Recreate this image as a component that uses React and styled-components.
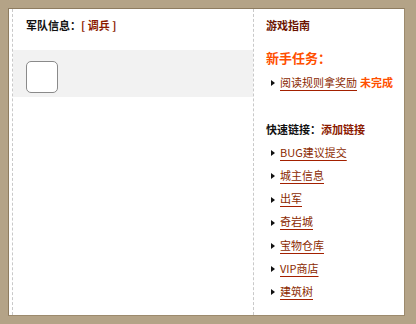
import React from 'react';
import styled, { createGlobalStyle } from 'styled-components';

const GlobalStyle = createGlobalStyle`
  html, body {
    margin: 0;
    padding: 0;
    background: #b4a387;
  }
  body {
    font-family: "Noto Sans CJK SC", "Liberation Sans", sans-serif;
    font-size: 11px;
  }
`;

const Frame = styled.div`
  width: 416px;
  height: 324px;
  padding: 8px 0 0 8px;
  box-sizing: border-box;
`;

const Panel = styled.div`
  width: 397px;
  height: 308px;
  box-sizing: border-box;
  background: #fff;
  border-top: 1px solid #8e7c60;
  border-left: 1px solid #8e7c60;
  border-right: 1px solid #9c8a6d;
  border-bottom: 1px solid #9c8a6d;
  display: flex;
  padding-left: 3px;
`;

const LeftCol = styled.div`
  width: 240px;
  flex-shrink: 0;
  border-left: 1px dashed #c9c9c9;
  border-right: 1px dashed #c9c9c9;
`;

const Title = styled.div`
  padding: 8px 0 0 13px;
  line-height: 16px;
  font-weight: bold;
  color: #111;
  > span {
    color: #8b1a00;
  }
`;

const SlotBand = styled.div`
  margin-top: 17px;
  height: 47px;
  background: #f2f2f2;
  padding: 11px 0 0 13px;
  box-sizing: border-box;
`;

const Slot = styled.div`
  width: 32px;
  height: 32px;
  box-sizing: border-box;
  border: 1px solid #8a8a8a;
  border-radius: 5px;
  background: #fff;
`;

const RightCol = styled.div`
  flex: 1;
  min-width: 0;
  padding: 8px 0 0 12px;
  white-space: nowrap;
`;

const GuideTitle = styled.div`
  line-height: 16px;
  font-weight: bold;
  color: #6b1400;
`;

const TaskTitle = styled.div`
  margin-top: 16px;
  line-height: 18px;
  font-size: 13px;
  font-weight: bold;
  color: #ff4f00;
`;

const Row = styled.div`
  display: flex;
  align-items: center;
  height: 23.2px;
  margin-top: ${p => p.$gap || 0}px;
`;

const Bullet = styled.i`
  flex-shrink: 0;
  width: 0;
  height: 0;
  border-top: 3px solid transparent;
  border-bottom: 3px solid transparent;
  border-left: 4px solid #111;
  margin: 3px 5px 0 5px;
`;

const Link = styled.a`
  color: #8b2a00;
  text-decoration: underline;
  text-decoration-color: #a32000;
  text-underline-offset: 3px;
  cursor: pointer;
`;

const Status = styled.span`
  margin-left: 3px;
  font-weight: bold;
  color: #ff5000;
`;

const QuickTitle = styled.div`
  margin-top: 28px;
  line-height: 16px;
  font-weight: bold;
  color: #111;
  > span {
    color: #8b1a00;
  }
`;

const List = styled.div`
  margin-top: 3px;
`;

const links = ['BUG建议提交', '城主信息', '出军', '奇岩城', '宝物仓库', 'VIP商店', '建筑树'];

export default function App() {
  return (
    <>
      <GlobalStyle />
      <Frame>
        <Panel>
          <LeftCol>
            <Title>军队信息：<span>[ 调兵 ]</span></Title>
            <SlotBand>
              <Slot />
            </SlotBand>
          </LeftCol>
          <RightCol>
            <GuideTitle>游戏指南</GuideTitle>
            <TaskTitle>新手任务：</TaskTitle>
            <Row $gap={3}>
              <Bullet />
              <Link>阅读规则拿奖励</Link>
              <Status>未完成</Status>
            </Row>
            <QuickTitle>快速链接：<span>添加链接</span></QuickTitle>
            <List>
              {links.map(l => (
                <Row key={l}>
                  <Bullet />
                  <Link>{l}</Link>
                </Row>
              ))}
            </List>
          </RightCol>
        </Panel>
      </Frame>
    </>
  );
}
